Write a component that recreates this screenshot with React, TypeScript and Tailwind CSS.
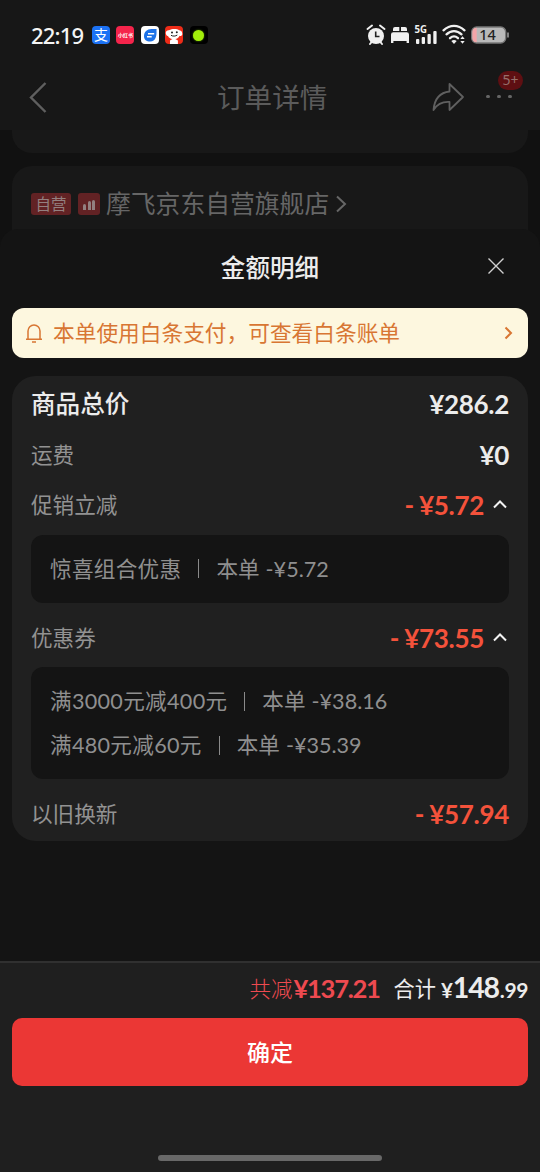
import type { ReactNode } from 'react';

/** 状态栏左侧的通知应用图标 */
function AppIcons() {
  return (
    <div className="flex gap-[6.4px]">
      <span className="flex size-[18px] items-center justify-center rounded-[4px] bg-[#1c72f5] text-[14px] leading-none text-white">支</span>
      <span className="flex size-[18px] items-center justify-center rounded-[4px] bg-[#f5244b] text-white">
        <span className="text-[5px] font-bold leading-none whitespace-nowrap">小红书</span>
      </span>
      <svg className="size-[18px]" viewBox="0 0 18 18">
        <rect width="18" height="18" rx="4" fill="#fff" />
        <path d="M3 10.5C3 5.800 6 3 10.500 3H15c1 0 .8.8.5 1.200.4 5.800-.8 11.300-6.300 11.300C5.500 15.500 3 13.500 3 10.500Z" fill="#1c72e8" />
        <path d="M7 7.700h6.200M6 10.800h4.700" stroke="#fff" strokeWidth="1.500" />
      </svg>
      <svg className="size-[18px]" viewBox="0 0 18 18">
        <rect width="18" height="18" rx="4" fill="#ee2c18" />
        <path d="M4 4.200C7 2.600 12 2.600 14.300 4.200c2.200.2 3.200 2 3 4.200-.8 1.600-2 1.800-2.700 1.300-.8 2-2.300 3.200-4.300 3.400l2.600 1.500v3.400H5v-3.400l2.400-1.500c-2-.3-3.700-1.400-4.400-3.100C2.200 10.400 1 9 .7 7c.3-2 1.500-3 3.300-2.800Z" fill="#fff" />
        <circle cx="7" cy="6.600" r="1" fill="#222" />
        <circle cx="11.800" cy="6.300" r="1" fill="#222" />
        <path d="M6 9.300c2 1.200 4.500 1 6.300-.3" stroke="#222" fill="none" />
      </svg>
      <span className="flex size-[18px] items-center justify-center rounded-[4px] bg-black">
        <span className="size-[11px] rounded-full bg-[#a2ee0a] shadow-[0_0_2px_#5c9a00]" />
      </span>
    </div>
  );
}

function StatusBar() {
  return (
    <div className="flex h-[70px] items-center justify-between px-[31px]">
      <div className="flex items-center gap-[9px]">
        <span className="w-[52px] font-['Noto_Sans',sans-serif] text-[22px] font-medium leading-none tracking-[-0.8px] text-[#f4f4f4]">22:19</span>
        <AppIcons />
      </div>
      <svg className="h-[24px] w-[143px]" viewBox="0 0 143 24" fill="#f0f0f0">
        {/* 闹钟 */}
        <circle cx="10" cy="13" r="8" />
        <path d="M1.500 6 6 2.500M18.500 6 14 2.500M4 21l2-2.500M16 21l-2-2.500" stroke="#f0f0f0" strokeWidth="2" strokeLinecap="round" />
        <path d="M9.700 8.500v5h3.800" stroke="#222" strokeWidth="1.600" fill="none" />
        {/* 睡眠 */}
        <path d="M27 8V6q0-2 2-2h4.300v4h-6.300ZM35 8V4h4q2 0 2 2v2h-6ZM25 11.500q0-2.300 2.300-2.300h13.400q2.300 0 2.300 2.300V20h-2.400v-2H27.400v2H25Z" />
        {/* 信号 */}
        <text x="48.500" y="9.500" fontSize="10" fontWeight="700" fontFamily="Noto Sans, sans-serif" textLength="12.500" lengthAdjust="spacingAndGlyphs">5G</text>
        <rect x="50" y="16" width="3.300" height="5" rx="1" />
        <rect x="55.700" y="14" width="3.300" height="7" rx="1" />
        <rect x="61.500" y="11" width="3.300" height="10" rx="1" />
        <rect x="67.300" y="8" width="3.300" height="13" rx="1" />
        {/* Wi-Fi */}
        <g fill="none" stroke="#f0f0f0" strokeWidth="2.300" strokeLinecap="round">
          <path d="M77.500 7.300C84 1.300 92 1.300 98.500 7.300" />
          <path d="M80.500 11.300c4.500-4.300 10.500-4.300 15 0" />
          <path d="M84 15.200c2.500-2.300 5.500-2.300 8 0" />
        </g>
        <path d="m85.300 18 2.700 3 2.700-3q-2.700-2-5.400 0ZM94.300 16l2.200-2.700 2.200 2.700ZM94.300 18l2.200 2.700 2.200-2.700Z" />
        {/* 电池 */}
        <rect x="105.700" y="4" width="34" height="16" rx="5" fill="#b9b9b9" stroke="#777" strokeWidth="1.400" />
        <path d="M110.700 4.700v14.600c-3 0-4.300-1.500-4.300-4.300V9c0-3 1.500-4.300 4.300-4.300Z" fill="#f3a5a8" />
        <path d="M142 9.500v5" stroke="#999" strokeWidth="1.600" />
        <text x="121.500" y="17.200" fontSize="14.500" fontWeight="500" fontFamily="Noto Sans, sans-serif" fill="#222" textAnchor="middle">14</text>
      </svg>
    </div>
  );
}

function NavBar() {
  return (
    <div className="flex h-[60px] items-center justify-between pb-[7px] pl-[28px] pr-[18px]">
      <svg className="h-[32px] w-[20px]" viewBox="0 0 20 32" fill="none" stroke="#5f5f5f" strokeWidth="2.400">
        <path d="M17.500 2 3 16.500 17.500 31" />
      </svg>
      <h1 className="ml-[65px] mt-[3px] text-[27.600px] leading-none text-[#5b5b5b]">订单详情</h1>
      <div className="relative flex items-center">
        <svg className="h-[30px] w-[34px]" viewBox="0 0 34 30" fill="none" stroke="#606060" strokeWidth="1.800" strokeLinejoin="round">
          <path d="M18.500 2 32 15 18.500 28v-8C11 19.500 6 22.500 2.500 28 3.500 17 9 10.500 18.500 9.500Z" />
        </svg>
        <span className="ml-[21px] mr-[10px] flex gap-[7.400px]">
          <i className="size-[3.600px] rounded-full bg-[#666]" />
          <i className="size-[3.600px] rounded-full bg-[#666]" />
          <i className="size-[3.600px] rounded-full bg-[#666]" />
        </span>
        <span className="absolute -right-px -top-[11px] flex h-[19px] w-[25px] items-center justify-center rounded-full bg-[#5e0f12] font-['Noto_Sans',sans-serif] text-[14px] leading-none text-[#96706c]">5+</span>
      </div>
    </div>
  );
}

function StoreRow() {
  return (
    <div className="mx-[12px] mt-[13px] flex h-[90px] items-start rounded-t-[20px] bg-[#181818] pl-[19px] pt-[24px] text-[#666]">
      <span className="mt-[3px] flex h-[22px] w-[40px] items-center justify-center rounded-[3px] bg-[#622224] pt-px text-[15.500px] leading-none text-[#938080]">自营</span>
      <span className="ml-[7px] mt-[3px] flex h-[22px] w-[22px] items-end justify-center gap-[1.500px] rounded-[3px] bg-[#622224] pb-[5px]">
        <i className="h-[6px] w-[3px] rounded-t-sm bg-[#938080]" />
        <i className="h-[9px] w-[3px] rounded-t-sm bg-[#938080]" />
        <i className="h-[10px] w-[3px] rounded-t-sm bg-[#938080]" />
      </span>
      <span className="ml-[6px] text-[24.800px] leading-[28px]">摩飞京东自营旗舰店</span>
      <svg className="ml-[6px] mt-[5px] h-[18px] w-[12px]" viewBox="0 0 12 18" fill="none" stroke="#666" strokeWidth="2">
        <path d="m2 1.500 8 7.500-8 7.500" />
      </svg>
    </div>
  );
}

function Row({ label, children, open }: { label: string; children: ReactNode; open?: boolean }) {
  return (
    <div className="flex h-[50.5px] items-center justify-between">
      <span className="text-[21.600px] text-[#929292]">{label}</span>
      <span className="flex items-center text-[26px] font-bold leading-none tracking-[-0.300px]">
        {children}
        {open && (
          <svg className="ml-[9px] mr-[2px] h-[12px] w-[14px]" viewBox="0 0 14 12" fill="none" stroke="#f2f2f2" strokeWidth="2">
            <path d="m1 8.500 6-6 6 6" />
          </svg>
        )}
      </span>
    </div>
  );
}

function Minus({ value }: { value: string }) {
  return (
    <span className="flex text-[#f4523b]">
      <span className="mr-[5px]">-</span>¥{value}
    </span>
  );
}

function Detail({ name, value }: { name: string; value: string }) {
  return (
    <div className="flex h-[44px] items-center text-[21.600px] text-[#8f8f8f]">
      <span className="tracking-[0.300px]">{name}</span>
      <span className="mx-[17px] h-[19px] w-px bg-[#8a8a8a]" />
      <span>本单</span>
      <span className="ml-[6px]">-¥{value}</span>
    </div>
  );
}

export default function App() {
  return (
    <div className="flex h-[1172px] w-[540px] flex-col overflow-hidden bg-[#111] font-['Lato','Noto_Sans_CJK_SC',sans-serif]">
      <header className="h-[229px] shrink-0">
        <div className="h-[130px] bg-[#171717]">
          <StatusBar />
          <NavBar />
        </div>
        <div className="mx-[12px] h-[23px] rounded-b-[20px] bg-[#181818]" />
        <StoreRow />
      </header>

      <section className="flex flex-1 flex-col rounded-t-[18px] bg-[#141414]">
        <div className="flex h-[79px] items-center pl-[53px] pr-[35px]">
          <h2 className="flex-1 text-center text-[24.600px] font-medium text-[#ececec]">金额明细</h2>
          <svg className="mb-[5px] size-[18px]" viewBox="0 0 18 18" stroke="#d0d0d0" strokeWidth="1.400">
            <path d="m1.500 1.500 15 15M16.500 1.500l-15 15" />
          </svg>
        </div>

        <div className="mx-[12px] flex h-[50px] items-center rounded-[12px] bg-[#fdf7df] pl-[13px] pr-[14px] text-[#d87633]">
          <svg className="h-[20px] w-[18px]" viewBox="0 0 18 20" fill="none" stroke="currentColor" strokeWidth="1.500">
            <path d="M1 16.200h16M3 16V8a6 6 0 0 1 12 0v8M7 19h4" />
          </svg>
          <span lang="zh-CN" className="ml-[10px] flex-1 text-[21.700px]">本单使用白条支付，可查看白条账单</span>
          <svg className="mr-px h-[14px] w-[9px]" viewBox="0 0 9 14" fill="none" stroke="currentColor" strokeWidth="2">
            <path d="m1.500 1.500 5.500 5.500-5.500 5.500" />
          </svg>
        </div>

        <div className="mx-[12px] mt-[18px] h-[465px] rounded-[24px] bg-[#202020] px-[19px] pt-[3px]">
          <div className="flex h-[50.5px] items-center justify-between text-[#ececec]">
            <span className="text-[24.600px] font-medium">商品总价</span>
            <span className="text-[26px] font-bold tracking-[-0.300px]">¥286.2</span>
          </div>
          <Row label="运费"><span className="text-[#ececec]">¥0</span></Row>
          <Row label="促销立减" open><Minus value="5.72" /></Row>
          <div className="mt-[4px] rounded-[12px] bg-[#141414] px-[19px] py-[12.250px]">
            <Detail name="惊喜组合优惠" value="5.72" />
          </div>
          <div className="mt-[9.500px]">
            <Row label="优惠券" open><Minus value="73.55" /></Row>
          </div>
          <div className="mt-[4px] rounded-[12px] bg-[#141414] px-[19px] py-[12px]">
            <Detail name="满3000元减400元" value="38.16" />
            <Detail name="满480元减60元" value="35.39" />
          </div>
          <div className="mt-[9.500px]">
            <Row label="以旧换新"><Minus value="57.94" /></Row>
          </div>
        </div>
      </section>

      <footer className="flex h-[211px] shrink-0 flex-col items-center border-t-2 border-[#303030] bg-[#1f1f1f] px-[12px]">
        <div className="flex h-[55px] w-full items-center justify-end pb-[7px]">
          <div className="flex items-baseline whitespace-nowrap leading-none">
            <span className="-translate-y-px text-[21.500px] font-light text-[#ee4a50]">共减</span>
            <span className="ml-px text-[25.600px] font-bold tracking-[-1.300px] text-[#ee4a50]">¥137.21</span>
            <span className="ml-[14px] -translate-y-px text-[21.200px] text-[#ececec]">合计</span>
            <span className="ml-[5px] text-[20.500px] font-bold text-[#ececec]">¥</span>
            <span className="text-[28.500px] font-bold tracking-[-1.200px] text-[#ececec]">148</span>
            <span className="ml-px text-[21px] font-bold tracking-[-0.400px] text-[#ececec]">.99</span>
          </div>
        </div>
        <button className="h-[68px] w-full rounded-[10px] bg-[#eb3735] text-[23px] font-medium text-white">确定</button>
        <div className="mt-[69px] h-[6px] w-[224px] rounded-full bg-[#686868]" />
      </footer>
    </div>
  );
}
